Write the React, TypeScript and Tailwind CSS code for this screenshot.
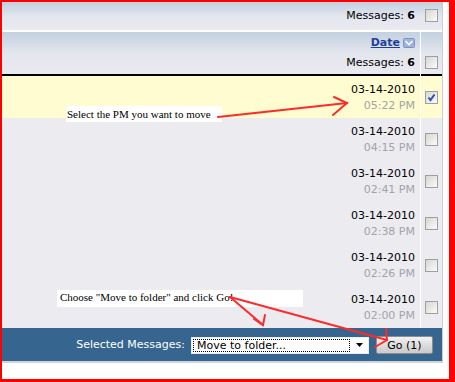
import React from "react"

const rows = [
  { date: "03-14-2010", time: "05:22 PM", checked: true },
  { date: "03-14-2010", time: "04:15 PM", checked: false },
  { date: "03-14-2010", time: "02:41 PM", checked: false },
  { date: "03-14-2010", time: "02:38 PM", checked: false },
  { date: "03-14-2010", time: "02:26 PM", checked: false },
  { date: "03-14-2010", time: "02:00 PM", checked: false },
]

function Checkbox({ checked = false }: { checked?: boolean }) {
  return (
    <span className="relative block w-[13px] h-[13px] border border-[#9ca0a6] bg-gradient-to-br from-[#d6d6d2] to-[#fbfbf9]">
      {checked && (
        <svg className="absolute inset-0" width="11" height="11" viewBox="0 0 11 11">
          <path d="M2.5 5.5 L4.5 8 L8.5 2.5" stroke="#2b4ea6" strokeWidth="2" fill="none" />
        </svg>
      )}
    </span>
  )
}

function SortIcon() {
  return (
    <svg width="12" height="10" viewBox="0 0 12 10" className="ml-[3px]">
      <rect x="0.5" y="0.5" width="11" height="9" rx="1" fill="#9fb2e0" stroke="#7c92c8" />
      <path d="M2.5 3 L6 6.5 L9.5 3" stroke="#ffffff" strokeWidth="1.6" fill="none" />
    </svg>
  )
}

export default function App() {
  return (
    <div className="relative w-[455px] h-[382px] bg-white border-t-2 border-l-2 border-r-[6px] border-b-[3px] border-[#ff0000] font-['DejaVu_Sans',sans-serif] text-[11px] text-black overflow-hidden">
      <div className="w-[441px] border-r border-[#c6cdd9]">
        {/* top count row */}
        <div className="flex h-[28px] bg-gradient-to-b from-[#c2cfdf] via-[#e3e6ee] to-[#eaeaf0]">
          <div className="w-[418px] flex items-center justify-end pr-[5px]">
            <span>
              Messages: <b>6</b>
            </span>
          </div>
          <div className="w-px" />
          <div className="w-[21px] flex items-center justify-center pb-[2px]">
            <Checkbox />
          </div>
        </div>
        <div className="h-[2px] bg-white" />

        {/* header */}
        <div className="flex h-[44px]">
          <div className="w-[418px] flex flex-col items-end pr-[5px] border-b-2 border-black bg-gradient-to-b from-[#c3d0e0] via-[#e4e6ee] to-[#eaeaf0]">
            <div className="h-[21px] flex items-center pt-[1px]">
              <a className="font-bold text-[#1d3f9c] underline">Date</a>
              <SortIcon />
            </div>
            <div className="h-[21px] flex items-center">
              <span>
                Messages: <b>6</b>
              </span>
            </div>
          </div>
          <div className="w-px bg-white" />
          <div className="w-[21px] flex items-end justify-center pb-[5px] border-b-2 border-black bg-gradient-to-b from-[#c3d0e0] via-[#e4e6ee] to-[#eaeaf0]">
            <Checkbox />
          </div>
        </div>

        {/* messages */}
        {rows.map((row) => (
          <div key={row.time} className={`flex h-[42px] ${row.checked ? "bg-[#fefcd0]" : "bg-[#ebebf0]"}`}>
            <div className="w-[418px] flex flex-col items-end pr-[5px] pt-[6px] leading-[16px]">
              <span>{row.date}</span>
              <span className="text-[#a3a3a8]">{row.time}</span>
            </div>
            <div className="w-px bg-white" />
            <div className="w-[21px] flex items-center justify-center">
              <Checkbox checked={row.checked} />
            </div>
          </div>
        ))}

        {/* footer */}
        <div className="h-[35px] flex items-center justify-end pr-[9px] pt-[1px] bg-[#36658f] border-b-2 border-[#cfd3dc] text-white">
          <span className="mr-[6px]">Selected Messages:</span>
          <div className="w-[178px] h-[17px] flex bg-white border border-[#e6eef6] text-black">
            <div className="flex-1 m-[1px] border border-dotted border-black flex items-center pl-[3px] leading-none">
              Move to folder...
            </div>
            <div className="w-[17px] flex items-center justify-center">
              <svg width="7" height="4" viewBox="0 0 7 4">
                <path d="M0 0 H7 L3.5 4 Z" fill="#000" />
              </svg>
            </div>
          </div>
          <button className="ml-[7px] w-[57px] h-[18px] border border-[#8e8e8e] bg-gradient-to-b from-[#f2f2f2] to-[#c9c9c9] text-black text-[11px] leading-none rounded-[2px]">
            Go (1)
          </button>
        </div>
      </div>

      {/* annotations */}
      <div className="absolute -left-[2px] -top-[2px] w-[455px] h-[382px] pointer-events-none">
        <div className="absolute left-[66px] top-[106px] w-[156px] h-[16px] bg-white pl-[1px] font-['Liberation_Serif',serif] text-[11px] leading-[16px]">
          Select the PM you want to move
        </div>
        <div className="absolute left-[57px] top-[290px] w-[246px] h-[17px] bg-white pl-[3px] font-['Liberation_Serif',serif] text-[11px] leading-[15px]">
          Choose "Move to folder" and click Go!
        </div>
        <svg className="absolute inset-0" width="455" height="382" viewBox="0 0 455 382">
          <g stroke="#ff2a2a" strokeWidth="2" fill="none" strokeLinecap="round">
            <path d="M218 117 L347 103" />
            <path d="M334 97 L347 103 L333 115" />
            <path d="M230 297 L263 325" />
            <path d="M254 319 L263 325 L265 315" />
            <path d="M230 297 L387 340" />
            <path d="M386 329 L387 340 L375 347" />
          </g>
        </svg>
      </div>
    </div>
  )
}
